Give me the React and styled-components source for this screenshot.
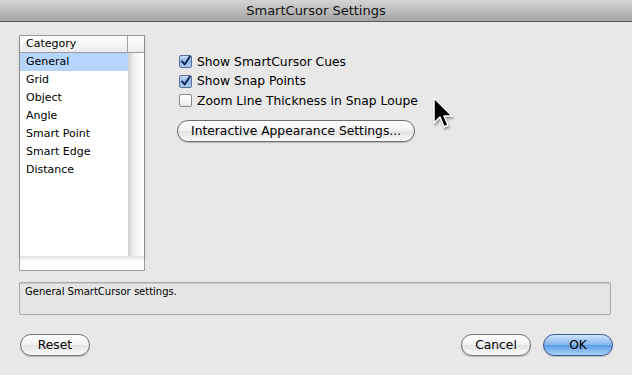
import styled, { createGlobalStyle } from "styled-components"

const categories = ["General", "Grid", "Object", "Angle", "Smart Point", "Smart Edge", "Distance"]

const options = [
    { label: "Show SmartCursor Cues", checked: true },
    { label: "Show Snap Points", checked: true },
    { label: "Zoom Line Thickness in Snap Loupe", checked: false },
]

export default function App(){
    return(
        <Window>
            <GlobalStyle/>
            <TitleBar>SmartCursor Settings</TitleBar>
            <Body>
                <Top>
                    <ListBox>
                        <ListInner>
                            <ListHeader>
                                <HeaderCell>Category</HeaderCell>
                                <HeaderCorner/>
                            </ListHeader>
                            <Rows>
                                <RowList>
                                    {categories.map((c, i) => <Row key={c} selected={i === 0}>{c}</Row>)}
                                </RowList>
                                <ScrollTrack/>
                            </Rows>
                        </ListInner>
                        <ListFoot/>
                    </ListBox>
                    <Options>
                        {options.map(o => (
                            <Option key={o.label}>
                                <Check checked={o.checked}>
                                    {o.checked && (
                                        <svg width="13" height="13" viewBox="0 0 13 13">
                                            <path d="M2.5 6.5 L5.5 10 L11.5 1" fill="none" stroke="#0d1f4a" strokeWidth="2.2" strokeLinecap="round" strokeLinejoin="round"/>
                                        </svg>
                                    )}
                                </Check>
                                {o.label}
                            </Option>
                        ))}
                        <PillButton>Interactive Appearance Settings...</PillButton>
                    </Options>
                    <Pointer width="22" height="34" viewBox="0 0 22 34">
                        <path d="M2 1 L2 26 L8 20 L12 30 L16 28 L12 19 L20 19 Z" fill="#000" stroke="#fff" strokeWidth="1.5" strokeLinejoin="round"/>
                    </Pointer>
                </Top>
                <Description>General SmartCursor settings.</Description>
                <Footer>
                    <PillButton width="70px">Reset</PillButton>
                    <Actions>
                        <PillButton width="70px">Cancel</PillButton>
                        <PillButton width="70px" primary>OK</PillButton>
                    </Actions>
                </Footer>
            </Body>
        </Window>
    )
}

const GlobalStyle = createGlobalStyle`
body{
    margin:0;
    background:#e8e8e8;
    font-family: "DejaVu Sans", "Liberation Sans", sans-serif;
}`;

const Window = styled.div`
width:632px;
height:375px;
background:#e8e8e8;
display:flex;
flex-direction:column;
overflow:hidden;`;

const TitleBar = styled.div`
height:22px;
line-height:21px;
text-align:center;
font-size:13px;
color:#111;
background:linear-gradient(#d4d4d4, #a4a4a4);
border-bottom:1px solid #555;
box-sizing:border-box;`;

const Body = styled.div`
flex:1;
display:flex;
flex-direction:column;
padding:13px 21px 0 19px;`;

const Top = styled.div`
position:relative;
display:flex;
gap:32px;
height:236px;`;

const ListBox = styled.div`
width:126px;
height:236px;
border:1px solid #9a9a9a;
box-sizing:border-box;
background:#f4f4f4;
display:flex;
flex-direction:column;`;

const ListInner = styled.div`
height:220px;
display:flex;
flex-direction:column;
background:#fff;
box-shadow:0 2px 3px rgba(0,0,0,0.25);`;

const ListHeader = styled.div`
display:flex;
height:16px;
background:linear-gradient(#ffffff, #ececec);
border-bottom:1px solid #9a9a9a;
font-size:11px;
color:#000;`;

const HeaderCell = styled.div`
width:108px;
padding-left:6px;
line-height:16px;
box-sizing:border-box;
border-right:1px solid #a0a0a0;`;

const HeaderCorner = styled.div`
flex:1;`;

const Rows = styled.div`
flex:1;
display:flex;`;

const RowList = styled.div`
width:108px;
background:#fff;`;

const Row = styled.div`
height:18px;
line-height:18px;
padding-left:6px;
font-size:11px;
color:#000;
background:${p => p.selected ? "#b5d5fd" : "transparent"};`;

const ScrollTrack = styled.div`
flex:1;
background:linear-gradient(90deg, #d0d0d0, #f2f2f2 40%, #ffffff);`;

const ListFoot = styled.div`
flex:1;
background:linear-gradient(#e0e0e0, #ffffff 40%);`;

const Options = styled.div`
display:flex;
flex-direction:column;
align-items:flex-start;
padding-top:17px;`;

const Option = styled.div`
display:flex;
align-items:center;
gap:5px;
height:19.5px;
font-size:12.3px;
color:#000;
margin-left:2px;`;

const Check = styled.span`
width:13px;
height:13px;
box-sizing:border-box;
border:1px solid ${p => p.checked ? "#5b6f96" : "#8a8a8a"};
border-radius:2px;
background:${p => p.checked ? "linear-gradient(#c8def7, #8db7ea 50%, #a9cdf3)" : "linear-gradient(#ffffff, #e9e9e9)"};
display:flex;
align-items:center;
justify-content:center;`;

const PillButton = styled.button`
width:${p => p.width || "auto"};
height:22px;
padding:0 13px;
margin-top:${p => p.width ? "0" : "9px"};
border-radius:11px;
border:1px solid ${p => p.primary ? "#3a5a8c" : "#707070"};
background:${p => p.primary
    ? "linear-gradient(#cfe4fb, #82b4ec 50%, #5a9be6 51%, #a8d2fb)"
    : "linear-gradient(#ffffff, #f1f1f1 50%, #e2e2e2 51%, #fbfbfb)"};
font-family:"DejaVu Sans", "Liberation Sans", sans-serif;
font-size:12.3px;
color:#000;
box-shadow:0 1px 1px rgba(0,0,0,0.2);
display:flex;
align-items:center;
justify-content:center;`;

const Pointer = styled.svg`
position:absolute;
left:413px;
top:62px;
filter:drop-shadow(1px 2px 1px rgba(0,0,0,0.35));`;

const Description = styled.div`
margin-top:11px;
height:33px;
width:592px;
box-sizing:border-box;
border:1px solid #a8a8a8;
border-radius:2px;
background:#e6e6e6;
box-shadow:inset 0 1px 1px rgba(0,0,0,0.12);
padding:3px 0 0 5px;
font-size:10px;
color:#000;`;

const Footer = styled.div`
margin-top:19px;
display:flex;
justify-content:space-between;
width:593px;
padding-left:1px;`;

const Actions = styled.div`
display:flex;
gap:12px;`;
